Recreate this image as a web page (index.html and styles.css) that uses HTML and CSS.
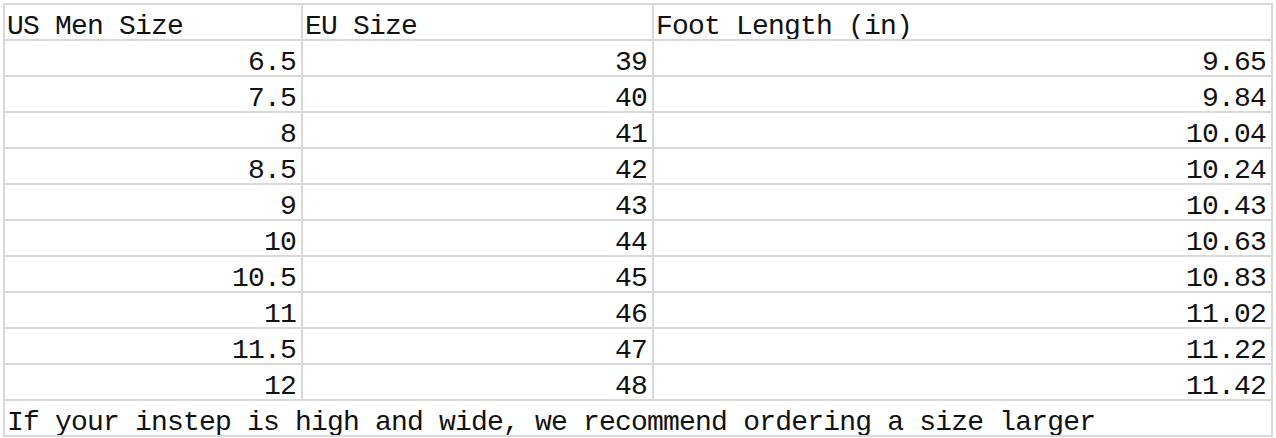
FILE: index.html
```html
<!DOCTYPE html>
<html lang="en">
<head>
<meta charset="utf-8">
<title>Size Chart</title>
<link rel="stylesheet" href="styles.css">
</head>
<body>
<div class="sheet">
  <div class="cell">US Men Size</div><div class="cell">EU Size</div><div class="cell">Foot Length (in)</div>
  <div class="cell num">6.5</div><div class="cell num">39</div><div class="cell num">9.65</div>
  <div class="cell num">7.5</div><div class="cell num">40</div><div class="cell num">9.84</div>
  <div class="cell num">8</div><div class="cell num">41</div><div class="cell num">10.04</div>
  <div class="cell num">8.5</div><div class="cell num">42</div><div class="cell num">10.24</div>
  <div class="cell num">9</div><div class="cell num">43</div><div class="cell num">10.43</div>
  <div class="cell num">10</div><div class="cell num">44</div><div class="cell num">10.63</div>
  <div class="cell num">10.5</div><div class="cell num">45</div><div class="cell num">10.83</div>
  <div class="cell num">11</div><div class="cell num">46</div><div class="cell num">11.02</div>
  <div class="cell num">11.5</div><div class="cell num">47</div><div class="cell num">11.22</div>
  <div class="cell num">12</div><div class="cell num">48</div><div class="cell num">11.42</div>
  <div class="cell note">If your instep is high and wide, we recommend ordering a size larger</div>
</div>
</body>
</html>
```
FILE: styles.css
```css
html, body {
  margin: 0;
  padding: 0;
  background: #ffffff;
}
body {
  padding: 3px 0 0 3px;
}
.sheet {
  display: grid;
  grid-template-columns: 298px 351px 619px;
  grid-auto-rows: 36px;
  width: 1268px;
  border-left: 2px solid #d9d9d9;
  border-top: 2px solid #d9d9d9;
  font-family: "Liberation Mono", "DejaVu Sans Mono", monospace;
  font-size: 28px;
  letter-spacing: -0.8px;
  color: #111111;
}
.cell {
  display: flex;
  align-items: flex-end;
  line-height: 24px;
  padding: 0 4px 0 2px;
  border-right: 2px solid #d9d9d9;
  border-bottom: 2px solid #d9d9d9;
  white-space: nowrap;
  overflow: hidden;
}
.num {
  justify-content: flex-end;
  padding-right: 5px;
}
.note {
  grid-column: 1 / -1;
}
```
